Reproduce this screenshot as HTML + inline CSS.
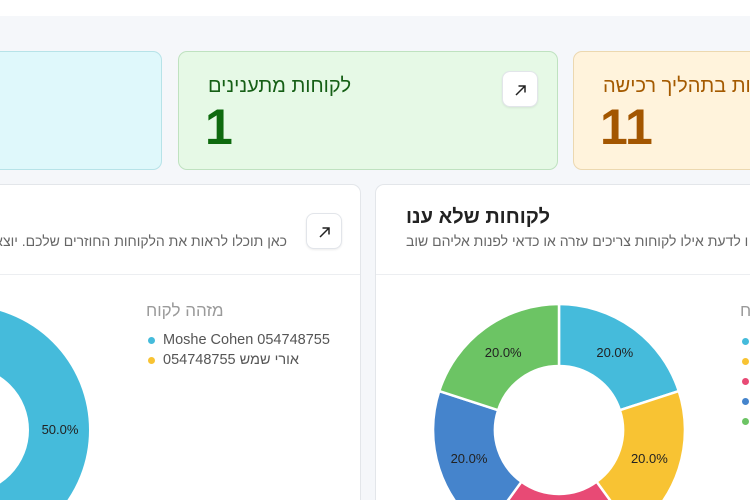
<!DOCTYPE html>
<html><head><meta charset="utf-8"><style>
*{margin:0;padding:0;box-sizing:border-box}
html,body{width:750px;height:500px;overflow:hidden}
body{background:#f5f7fa;font-family:"Liberation Sans","DejaVu Sans",sans-serif;position:relative}
.top{position:absolute;left:0;top:0;width:750px;height:16px;background:#fff}
.card{position:absolute;top:51px;height:119px;border-radius:9px;border:1px solid;overflow:hidden}
.t{position:absolute;font-size:20px;white-space:nowrap;direction:rtl}
.n{position:absolute;font-size:50px;font-weight:bold;line-height:1}
.btn{position:absolute;width:36px;height:36px;background:#fff;border:1px solid #e2e5ea;border-radius:8px;box-shadow:0 1px 2px rgba(0,0,0,.08)}
.panel{position:absolute;top:184px;height:316px;background:#fff;border:1px solid #e3e6ea;border-bottom:none;border-radius:9px 9px 0 0;overflow:hidden}
.sub{position:absolute;font-size:14px;color:#666;white-space:nowrap;direction:rtl}
.leg{position:absolute;font-size:14.5px;color:#555;white-space:nowrap}
.dot{display:inline-block;width:7px;height:7px;border-radius:50%;margin-right:8px;vertical-align:middle}
</style></head><body>
<div class="top"></div>
<div class="card" style="left:-10px;width:172px;background:#dff8fb;border-color:#b7e3e8"></div>
<div class="card" style="left:178px;width:380px;background:#e6f9e6;border-color:#bfe2c0">
 <div class="t" style="left:29px;top:23px;color:#155f15">לקוחות מתענינים</div>
 <div class="n" style="left:26px;top:50px;color:#0e6a0e">1</div>
 <div class="btn" style="left:323px;top:19px"><svg width="36" height="36" viewBox="0 0 36 36"><path d="M13 23 L22 14 M15.5 14 H22 V20.5" stroke="#222" stroke-width="1.5" fill="none"/></svg></div>
</div>
<div class="card" style="left:573px;width:200px;background:#fff3dc;border-color:#ecd8b0">
 <div class="t" style="left:29px;top:23px;color:#a45a00">לקוחות בתהליך רכישה</div>
 <div class="n" style="left:26px;top:50px;color:#a35600">11</div>
</div>

<div class="panel" style="left:-20px;width:381px">
 <div class="btn" style="left:325px;top:28px"><svg width="36" height="36" viewBox="0 0 36 36"><path d="M13 23 L22 14 M15.5 14 H22 V20.5" stroke="#222" stroke-width="1.5" fill="none"/></svg></div>
 <div class="sub" style="right:73px;top:48px">כאן תוכלו לראות את הלקוחות החוזרים שלכם. יוצאים לדרך</div>
 <div style="position:absolute;left:0;top:89px;width:381px;height:1px;background:#eceef1"></div>
 <div style="position:absolute;left:165px;top:116px;font-size:17px;color:#9a9a9a;direction:rtl;white-space:nowrap">מזהה לקוח</div>
 <div class="leg" style="left:167px;top:147px"><span class="dot" style="background:#45bbdb"></span>Moshe Cohen 054748755</div>
 <div class="leg" style="left:167px;top:167px"><span class="dot" style="background:#f8c333"></span>054748755 אורי שמש</div>
</div>

<div class="panel" style="left:375px;width:375px;border-right:none;border-radius:9px 0 0 0">
 <div style="position:absolute;left:30px;top:21px;font-size:20px;font-weight:bold;color:#222;direction:rtl;white-space:nowrap">לקוחות שלא ענו</div>
 <div class="sub" style="left:30px;top:48px;direction:ltr"><span style="direction:rtl;unicode-bidi:embed">ו לדעת אילו לקוחות צריכים עזרה או כדאי לפנות אליהם שוב</span></div>
 <div style="position:absolute;left:0;top:89px;width:400px;height:1px;background:#eceef1"></div>
 <div style="position:absolute;left:364px;top:116px;font-size:17px;color:#9a9a9a;white-space:nowrap;direction:ltr">מזהה לקוח</div>
 <span class="dot" style="position:absolute;left:366px;top:153px;background:#45bbdb"></span>
 <span class="dot" style="position:absolute;left:366px;top:173px;background:#f8c333"></span>
 <span class="dot" style="position:absolute;left:366px;top:193px;background:#e84a75"></span>
 <span class="dot" style="position:absolute;left:366px;top:213px;background:#4584cc"></span>
 <span class="dot" style="position:absolute;left:366px;top:233px;background:#6cc464"></span>
</div>

<svg width="750" height="500" viewBox="0 0 750 500" style="position:absolute;left:0;top:0;overflow:hidden" font-family="Liberation Sans, DejaVu Sans, sans-serif" font-size="13">
 <defs><clipPath id="lp"><rect x="0" y="185" width="360" height="315"/></clipPath><clipPath id="rp"><rect x="376" y="185" width="374" height="315"/></clipPath></defs>
 <g clip-path="url(#lp)">
  <path d="M-35 305 A125 125 0 0 1 -35 555 L-35 493 A63 63 0 0 0 -35 367 Z" fill="#45bbdb" stroke="#fff" stroke-width="2"/>
  <path d="M-35 555 A125 125 0 0 1 -35 305 L-35 367 A63 63 0 0 0 -35 493 Z" fill="#f8c333" stroke="#fff" stroke-width="2"/>
  <text x="60" y="434" text-anchor="middle" fill="#222">50.0%</text>
 </g>
 <g stroke="#fff" stroke-width="2.5" clip-path="url(#rp)">
  <path d="M559 304 A126 126 0 0 1 678.8 391.1 L619.9 410.2 A64 64 0 0 0 559 366 Z" fill="#45bbdb"/>
  <path d="M678.8 391.1 A126 126 0 0 1 633.1 531.9 L596.6 481.8 A64 64 0 0 0 619.9 410.2 Z" fill="#f8c333"/>
  <path d="M633.1 531.9 A126 126 0 0 1 484.9 531.9 L521.4 481.8 A64 64 0 0 0 596.6 481.8 Z" fill="#e84a75"/>
  <path d="M484.9 531.9 A126 126 0 0 1 439.2 391.1 L498.1 410.2 A64 64 0 0 0 521.4 481.8 Z" fill="#4584cc"/>
  <path d="M439.2 391.1 A126 126 0 0 1 559 304 L559 366 A64 64 0 0 0 498.1 410.2 Z" fill="#6cc464"/>
 </g>
 <g fill="#222" text-anchor="middle">
  <text x="614.8" y="357">20.0%</text>
  <text x="649.4" y="463">20.0%</text>
  <text x="469" y="463">20.0%</text>
  <text x="503.2" y="357">20.0%</text>
 </g>
</svg>
</body></html>
